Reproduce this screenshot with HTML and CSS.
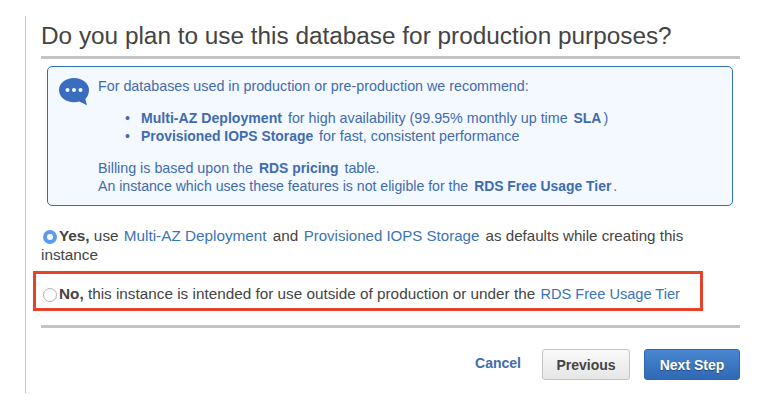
FILE: index.html
```html
<!DOCTYPE html>
<html lang="en">
<head>
<meta charset="utf-8">
<title>Production purposes</title>
<link rel="stylesheet" href="styles.css">
</head>
<body>
<main class="page">
  <h1 class="title">Do you plan to use this database for production purposes?</h1>
  <section class="info">
    <svg class="bubble" width="30" height="28" viewBox="0 0 30 28" aria-hidden="true">
      <path d="M15 0C6.700 0 0 5.200 0 12c0 6.800 6.700 12.300 15 12.300 1.900 0 3.700-.3 5.300-.8L28 27.300l-1.700-6.300C28.600 18.800 30 15.600 30 12 30 5.200 23.300 0 15 0z" fill="#3a6dbd"/>
      <circle cx="8.500" cy="12" r="2" fill="#f4f8ff"/>
      <circle cx="15" cy="12" r="2" fill="#f4f8ff"/>
      <circle cx="21.500" cy="12" r="2" fill="#f4f8ff"/>
    </svg>
    <div class="info-text">
      <p class="intro">For databases used in production or pre-production we recommend:</p>
      <ul class="features">
        <li><b class="term term-wide">Multi-AZ Deployment</b> for high availability (99.95% monthly up time <b class="term">SLA</b>)</li>
        <li><b class="term">Provisioned IOPS Storage</b> for fast, consistent performance</li>
      </ul>
      <p>Billing is based upon the <b class="term">RDS pricing</b> table.</p>
      <p class="notice">An instance which uses these features is not eligible for the <b class="term">RDS Free Usage Tier</b>.</p>
    </div>
  </section>
  <div class="choice choice-yes">
    <span class="radio radio-on"></span><b>Yes,</b> use <a class="link">Multi-AZ Deployment</a> and <a class="link link-narrow">Provisioned IOPS Storage</a> <span class="tight">as defaults while creating this</span><br>instance
  </div>
  <div class="choice choice-no">
    <span class="radio"></span><b>No,</b> this instance is intended for use outside of production or under the <a class="link link-small">RDS Free Usage Tier</a>
  </div>
  <footer class="actions">
    <a class="cancel">Cancel</a>
    <button class="btn btn-prev">Previous</button>
    <button class="btn btn-next">Next Step</button>
  </footer>
</main>
</body>
</html>
```

FILE: styles.css
```css
* { box-sizing: border-box; }
html, body { margin: 0; background: #fff; }
body { font-family: "Liberation Sans", Arial, sans-serif; font-size: 15.300px; color: #444; }
.page {
  margin: 16px 0 0 25px;
  width: 715px;
  height: 377px;
  padding: 4px 0 0 15px;
  border-left: 1px solid #c4c4c4;
}
.title {
  margin: 0;
  height: 39px;
  font-size: 24.350px;
  line-height: 32px;
  font-weight: 400;
  color: #444;
  border-bottom: 3px solid #c4c4c4;
}
.info {
  display: flex;
  margin: 7px 7px 0 6px;
  height: 140px;
  padding: 11px 0 0 11px;
  border: 1px solid #2f6fbd;
  border-radius: 5px;
  background: #f4f8ff;
  color: #3f6cb0;
  font-size: 14.300px;
  line-height: 18px;
}
.bubble { flex: none; }
.info-text { margin: -1px 0 0 9px; }
.info p { margin: 0; }
.info .notice { font-size: 14.120px; }
.features { margin: 14px 0; padding-left: 27px; list-style: none; }
.features li { height: 18px; }
.features li::before { content: "•"; display: inline-block; width: 16px; font-size: 14px; line-height: 1; }
.term { margin: 0 2px; font-size: 13.900px; }
.term-wide { font-size: 14.100px; }
.features .term:first-child { margin-left: 0; }
.choice { line-height: 19px; }
.choice-yes { margin-top: 20px; }
.choice-no {
  margin: 7px 37px 0 -8px;
  height: 40px;
  padding: 10px 0 0 5px;
  border: 3px solid #e8432a;
}
.link { color: #3a73b8; margin: 0 2px 0 1px; }
.link-narrow { font-size: 15.050px; }
.link-small { font-size: 14.600px; }
.tight { font-size: 15.150px; }
.radio {
  display: inline-block;
  width: 14px;
  height: 14px;
  margin: 0 2px;
  vertical-align: -3px;
  border: 1px solid #b4b4b4;
  border-radius: 50%;
  background: #fff;
}
.radio-on {
  border: 4.500px solid #5b9cf0;
}
.actions {
  display: flex;
  justify-content: flex-end;
  align-items: center;
  gap: 21px;
  margin-top: 14px;
  padding-top: 21px;
  border-top: 3px solid #c4c4c4;
}
.cancel { color: #3f6cb0; font-size: 14px; font-weight: 700; margin-top: -4px; }
.btn {
  height: 31px;
  border-radius: 3px;
  font: 700 14px "Liberation Sans", Arial, sans-serif;
  padding: 0;
}
.btn-prev {
  width: 88px;
  color: #444;
  border: 1px solid #c4c4c4;
  background: linear-gradient(#fafafa, #e6e6e6);
}
.btn-next {
  width: 96px;
  margin-left: -7px;
  color: #fff;
  border: 1px solid #2f66ad;
  background: linear-gradient(#4a87d0, #2f69b4);
  text-shadow: 0 1px 1px rgba(0,0,0,.4);
}
```
